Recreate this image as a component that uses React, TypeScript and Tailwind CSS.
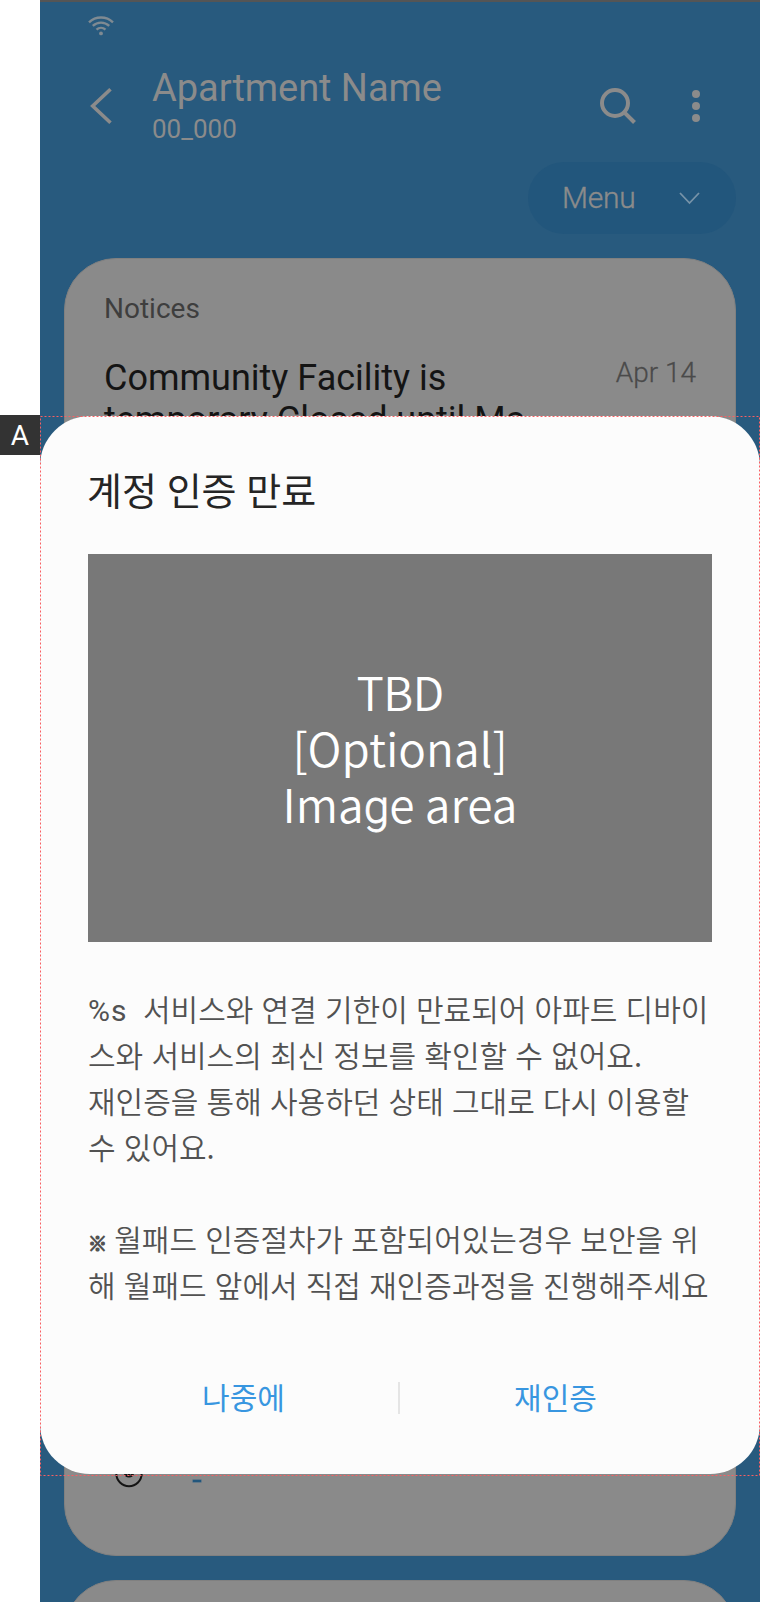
import React from "react";

const kr = "font-['Noto_Sans_CJK_KR',sans-serif]";

function StatusBar() {
  return (
    <div className="h-[46px] border-t-2 border-[#555555] pl-12 pt-[13px]">
      <svg width="26" height="21" viewBox="0 0 26 21" fill="none" stroke="#7f8a92" strokeWidth="2.4">
        <path d="M1 7.3a17.4 17.4 0 0 1 24 0" />
        <path d="M4.8 10.9a12 12 0 0 1 16.4 0" />
        <path d="M8.5 14.6a6.8 6.8 0 0 1 9 0" />
        <circle cx="13" cy="18.4" r="1.9" fill="#7f8a92" stroke="none" />
      </svg>
    </div>
  );
}

function Header() {
  return (
    <header className="flex h-[116px] pl-12 pr-[60px] text-[#8b8b8b]">
      <svg className="mt-[42px] mr-10" width="24" height="36" viewBox="0 0 24 36" fill="none" stroke="#8b8b8b" strokeWidth="3.6">
        <path d="M22.5 1.3 4.7 18 22.5 34.7" />
      </svg>
      <div className="flex-1 whitespace-nowrap">
        <h1 className="mt-5 text-[38px] leading-[44px] tracking-[-0.05px]">Apartment Name</h1>
        <p className="mt-[3px] text-[26px] leading-[32px]">00_000</p>
      </div>
      <svg className="mt-[42px]" width="36" height="36" viewBox="0 0 36 36" fill="none" stroke="#8b8b8b" strokeWidth="4">
        <circle cx="15" cy="15" r="13" />
        <path d="M24.3 24.3 34.5 34.5" />
      </svg>
      <svg className="ml-[56px] mt-[43px]" width="8" height="34" viewBox="0 0 8 34" fill="#8b8b8b">
        <circle cx="4" cy="5" r="4" />
        <circle cx="4" cy="17" r="4" />
        <circle cx="4" cy="29" r="4" />
      </svg>
    </header>
  );
}

function Notices() {
  return (
    <section className="mt-6 h-[1298px] rounded-[52px] border border-[#808080] bg-[#8a8a8a] px-[39px] pt-[33px]">
      <h2 className="text-[28px] leading-[34px] text-[#3e3e3e]">Notices</h2>
      <div className="mt-[30px] flex justify-between whitespace-nowrap">
        <p className="pt-px text-[36px] leading-[42px] text-[#141414]">
          Community Facility is
          <br />
          temporary Closed until Ma
        </p>
        <span className="text-[28px] font-light leading-[34px] text-[#4a4a4a] [-webkit-text-stroke:0.3px_#4a4a4a]">Apr 14</span>
      </div>
    </section>
  );
}

function Dialog() {
  return (
    <div role="dialog" className={`absolute left-10 top-[416px] flex h-[1058px] w-[720px] flex-col rounded-[50px] bg-[#fcfcfc] px-12 pt-[45px] whitespace-nowrap ${kr}`}>
      <h2 className="-ml-px text-[38px] font-normal leading-[56px] [word-spacing:1.2px] text-[#252525]">계정 인증 만료</h2>
      <div className="mt-[37px] flex h-[388px] w-[624px] items-center justify-center bg-[#787878] pb-[3px] text-center text-[46px] font-[350] leading-[56px] text-white">
        <p>
          <span className="tracking-[-0.5px]">TBD</span>
          <br />
          [Optional]
          <br />
          Ima<span className="font-['Roboto',sans-serif] font-light leading-none [-webkit-text-stroke:0.8px_#ffffff]">g</span>e area
        </p>
      </div>
      <p className="mt-[43px] text-[30px] font-[350] leading-[46px] [word-spacing:1.5px] text-[#525252]">
        <span className="inline-block w-[55px] font-['Roboto',sans-serif] font-normal leading-none tracking-[1px]">%s&nbsp;&nbsp;</span>서비스와 연결 기한이 만료되어 아파트 디바이
        <br />
        스와 서비스의 최신 정보를 확인할 수 없어요.
        <br />
        재인증을 통해 사용하던 상태 그대로 다시 이용할
        <br />
        수 있어요.
        <br />
        <br />
        <span className="inline-block w-[18px] text-[19px] leading-none [-webkit-text-stroke:1.2px_#525252]">※</span> 월패드 인증절차가 포함되어있는경우 보안을 위
        <br />
        해 월패드 앞에서 직접 재인증과정을 진행해주세요
      </p>
      <div className="mt-[66px] flex h-12 items-center pr-0.5 text-[30px] font-normal leading-[46px] text-[#3896e0]">
        <button className="flex-1 pb-0.5 pl-px">나중에</button>
        <span className="mt-px h-8 w-0.5 bg-[#e5e5e5]" />
        <button className="flex-1 pb-0.5 pl-px">재인증</button>
      </div>
    </div>
  );
}

export default function App() {
  return (
    <div className="relative flex h-[1602px] w-[760px] overflow-hidden bg-white pl-10 font-['Roboto',sans-serif]">
      <div className="flex-1 bg-[#285a7e]">
        <StatusBar />
        <Header />
        <main className="px-6">
          <div className="ml-auto flex h-[72px] w-[208px] items-center justify-between rounded-full bg-[#22567c] pl-[34px] pr-9">
            <span className="pb-0.5 text-[30px] font-light tracking-[-0.2px] text-[#8b8b8b] [-webkit-text-stroke:0.4px_#8b8b8b]">Menu</span>
            <svg width="21" height="13" viewBox="0 0 21 13" fill="none" stroke="#7793a8" strokeWidth="1.8">
              <path d="M1 1l9.5 10L20 1" />
            </svg>
          </div>
          <Notices />
          <section className="mt-6 h-[120px] rounded-t-[52px] border border-[#808080] bg-[#8a8a8a]" />
        </main>
      </div>
      <svg className="absolute left-[115px] top-[1460px]" width="28" height="28" viewBox="0 0 28 28" fill="none" stroke="#141414" strokeWidth="2">
        <circle cx="14" cy="13.5" r="12.7" />
        <path d="M9 13.5h10a5 4 0 0 1-10 0z" fill="#141414" stroke="none" />
        <path d="M12 15h1M15 15h1" stroke="#8a8a8a" strokeWidth="1" />
      </svg>
      <span className="absolute left-[193px] top-[1480px] h-[2px] w-2 bg-[#22567c] ring-[0.5px] ring-[#3d6785]" />
      <Dialog />
      <svg className="absolute left-10 top-[416px]" width="720" height="1060" fill="none" stroke="#f95f62" strokeDasharray="2 2">
        <rect x="0.5" y="0.5" width="719" height="1059" />
      </svg>
      <div className="absolute left-0 top-[415px] flex h-10 w-10 items-center justify-center bg-[#333333] pt-0.5 text-[28px] text-white">A</div>
    </div>
  );
}
